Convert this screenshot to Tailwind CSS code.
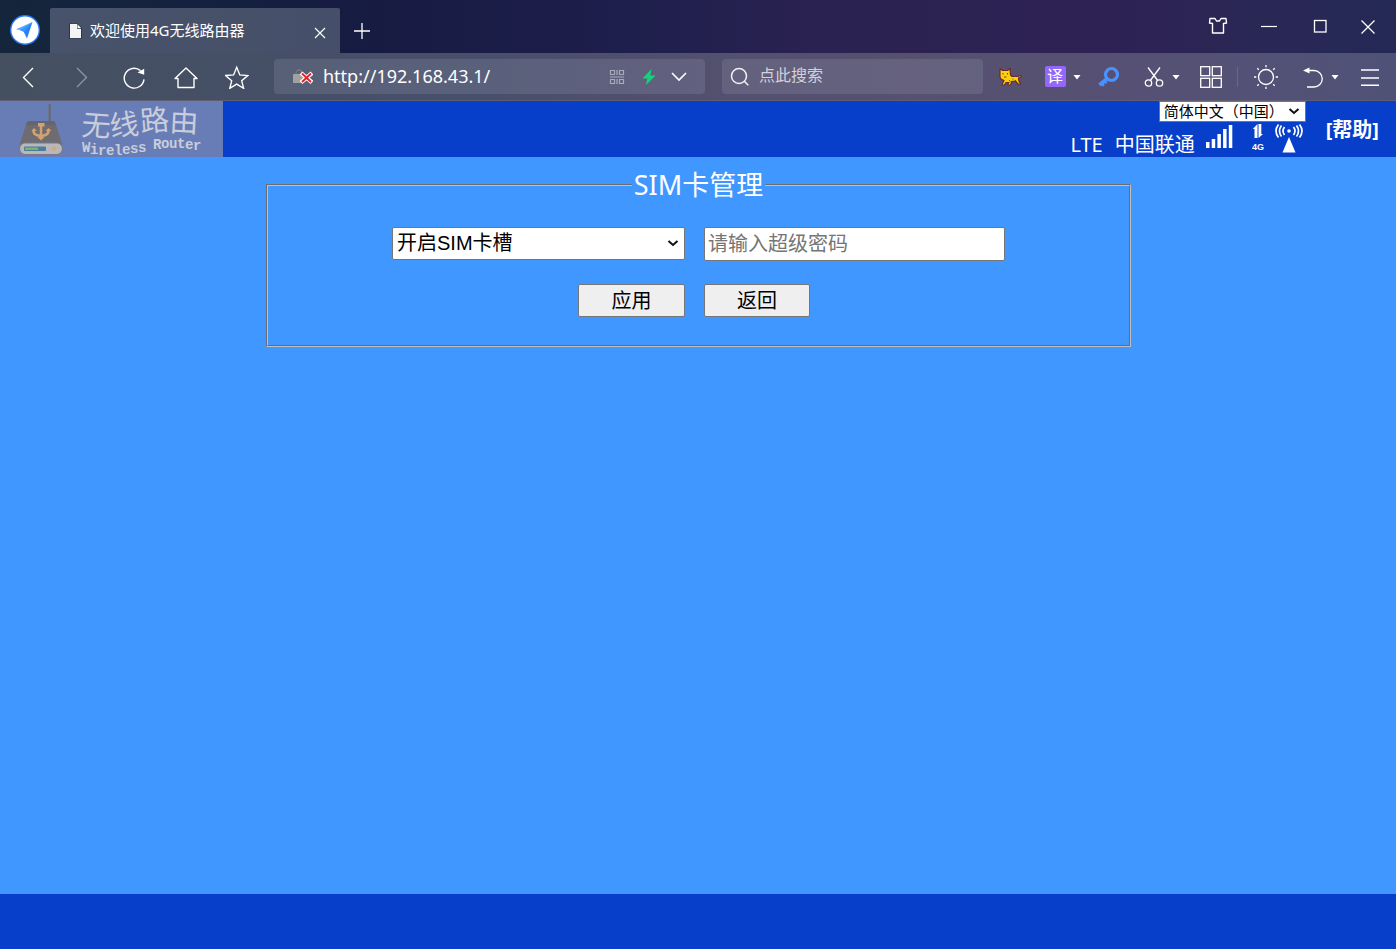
<!DOCTYPE html>
<html lang="zh-CN">
<head>
<meta charset="utf-8">
<title>欢迎使用4G无线路由器</title>
<script src="https://cdn.jsdelivr.net/npm/@tailwindcss/browser@4"></script>
</head>
<body class="flex min-h-screen flex-col bg-[#4097ff] font-['Noto_Sans','Noto_Sans_CJK_SC',sans-serif] text-white">

<!-- Title bar -->
<div class="flex h-[53px] items-stretch bg-[linear-gradient(90deg,#14263b_0%,#14213f_14%,#171b42_27%,#1e1f4c_45%,#2a2251_58%,#2e2254_80%,#2a2755_90%,#242955_100%)]">
  <div class="flex w-[50px] items-center justify-center pt-1.5">
    <svg class="size-[30px]" viewBox="0 0 30 30"><circle cx="15" cy="15" r="14.3" fill="#fff" stroke="#2878f0" stroke-width="1.4"/><path d="M22.500 7 6 14.300l7.200 1.500z" fill="#58a6ff"/><path d="M22.500 7 13.200 15.800 17 23.500z" fill="#2480f5"/><path d="M22.500 7 10 15.200l4.200 1.800z" fill="#3a92fb"/></svg>
  </div>
  <div class="mt-2 flex w-[290px] items-center rounded-t-xs bg-[linear-gradient(90deg,#47536a,#464f69)] pl-[19px] pr-3">
    <svg class="h-4 w-[13px]" viewBox="0 0 13 16"><path d="M0 .5h8.500L13 5v10.500H0z" fill="#2c3445"/><path d="M1 1h7v4.800h4V15H1z" fill="#f4f4f4"/><path d="M8.500 1.200 12 5H8.500z" fill="#fff"/></svg>
    <span class="ml-2 flex-1 pb-0.5 text-[15px] leading-5">欢迎使用4G无线路由器</span>
    <button aria-label="关闭标签页" class="flex size-4 items-center justify-center pt-1"><svg class="size-4" viewBox="0 0 16 16" fill="none" stroke="#fff" stroke-width="1.200"><path d="m3 3 10 10M13 3 3 13"/></svg></button>
  </div>
  <button aria-label="新建标签页" class="flex w-11 items-center justify-center pt-2"><svg class="size-[18px]" viewBox="0 0 18 18" stroke="#fff" stroke-width="1.300"><path d="M9 1v16M1 9h16"/></svg></button>
  <div class="flex-1"></div>
  <div class="flex items-center pr-[5px]">
    <button aria-label="皮肤" class="flex w-[51px] justify-center pb-0.5"><svg class="size-5" viewBox="0 0 20 20" fill="none" stroke="#fff" stroke-width="1.400" stroke-linejoin="round"><path d="M7 2.500H2L1.500 7 4.500 7.500v9.500h11V7.500l3-.500L18 2.500h-5L11.500 5h-3z"/></svg></button>
    <button aria-label="最小化" class="flex w-[51px] justify-center pb-0.5"><svg class="size-4" viewBox="0 0 16 16" stroke="#fff" stroke-width="1.200"><path d="M0 8.500h16"/></svg></button>
    <button aria-label="最大化" class="flex w-[51px] justify-center pb-0.5"><svg class="size-4" viewBox="0 0 16 16" fill="none" stroke="#fff" stroke-width="1.300"><rect x="2.500" y="2.500" width="11.500" height="11.500"/></svg></button>
    <button aria-label="关闭" class="flex w-[46px] justify-center"><svg class="size-4" viewBox="0 0 16 16" stroke="#fff" stroke-width="1.300"><path d="m1.500 1.500 13 13M14.500 1.500l-13 13"/></svg></button>
  </div>
</div>

<!-- Toolbar -->
<div class="flex h-12 items-center border-b border-[#605c74] bg-[linear-gradient(90deg,#445060_0%,#454f65_15%,#484f6b_34%,#54506f_52%,#57506f_65%,#555175_85%,#4f5277_100%)]">
  <button aria-label="后退" class="flex w-14 justify-center"><svg class="size-6" viewBox="0 0 24 24" fill="none" stroke="#fff" stroke-width="1.400"><path d="M17 3 7.500 12.500 17 22"/></svg></button>
  <button aria-label="前进" class="flex w-[52px] justify-center"><svg class="size-6" viewBox="0 0 24 24" fill="none" stroke="#8d94a3" stroke-width="1.400"><path d="M7 3l9.500 9.500L7 22"/></svg></button>
  <button aria-label="刷新" class="flex w-[52px] justify-center"><svg class="size-6" viewBox="0 0 24 24" fill="none" stroke="#fff" stroke-width="1.400"><path d="M18.600 5.700A9.900 9.900 0 1 0 22 14.300"/><path d="m15.500 7.500 6.700-3.800v6z" fill="#fff" stroke="none"/></svg></button>
  <button aria-label="主页" class="flex w-[52px] justify-center"><svg class="size-6" viewBox="0 0 24 24" fill="none" stroke="#fff" stroke-width="1.400" stroke-linejoin="round"><path d="M4 13.500H1L12 3 23 13.500h-3v9H4z"/></svg></button>
  <button aria-label="收藏" class="flex w-[50px] justify-center"><svg class="size-6" viewBox="0 0 24 24" fill="none" stroke="#fff" stroke-width="1.400"><path d="m11.700 2.300 3.100 7.600 8 .6-6.100 5.300 1.900 7.500-6.900-4.200-6.900 4.200 1.900-7.500-6.100-5.300 8-.6z"/></svg></button>

  <div class="ml-3 flex h-[35px] min-w-0 flex-1 items-center rounded bg-[#a0a5c0]/20 pl-[19px] pr-[17px]">
    <svg class="h-4 w-5 shrink-0" viewBox="0 0 20 16"><path d="M3 6V4a3 3 0 0 1 6 0v2" fill="none" stroke="#77787f" stroke-width="1.300"/><path d="M0 5h11v9H0z" fill="#a3a19f"/><path d="m8 4 11 9.500M19 4 8 13.500" stroke="#fff" stroke-width="4.200"/><path d="m9 4.500 9 8.500M18 4.500l-9 8.500" stroke="#e01f26" stroke-width="1.800"/></svg>
    <input type="text" aria-label="地址" value="http://192.168.43.1/" class="ml-2.5 min-w-0 flex-1 bg-transparent text-[18px] text-white outline-none">
    <button aria-label="二维码"><svg class="size-4" viewBox="0 0 16 16" fill="none" stroke="#aaa9ba" stroke-width="1.200"><path d="M1.500 1.500h4v4h-4zM10.500 1.500h4v4h-4zM1.500 10.500h4v4h-4zM10.500 10.500h4v4h-4zM8 1v5M8 10v5M1 8h14"/></svg></button>
    <button aria-label="极速模式" class="ml-4"><svg class="size-4" viewBox="0 0 16 16"><path d="M10.500 0 1.500 9.500h4.800L5 16l9.500-9.500H9.300z" fill="#14d37b"/></svg></button>
    <button aria-label="展开地址栏" class="ml-[13px]"><svg class="h-4 w-[18px]" viewBox="0 0 18 16" fill="none" stroke="#fff" stroke-width="1.600"><path d="m2 4 7 7 7-7"/></svg></button>
  </div>

  <div class="ml-[17px] flex h-[35px] w-[261px] items-center rounded bg-[#a0a5c0]/20 pl-2 pr-2">
    <svg class="size-5 shrink-0" viewBox="0 0 20 20" fill="none" stroke="#f1f0f4" stroke-width="1.500"><circle cx="9" cy="9" r="7.500"/><path d="m14.300 14.300 4 4"/></svg>
    <input type="text" aria-label="搜索" placeholder="点此搜索" class="ml-[9px] min-w-0 flex-1 bg-transparent pb-1 text-[16px] text-white outline-none placeholder:text-[#d3d1da]">
  </div>

  <button aria-label="猎豹" class="flex w-[54px] justify-center"><svg class="h-5 w-6" viewBox="0 0 24 20"><path d="m2 1.500 2.500 2h5l2.500-2 .500 6.500 1.500 1.500h6l2-1H23v1.500l-2.500 1 .5 3.500 1.500 1.500v1h-2.500l-2.500-3-4.500.5.500 1.500-1.500 2h-2V17l1-1.500H8L6.500 18h-2v-1.500l1.500-3L3 12 2 10z" fill="#f8d010" stroke="#6b2a2c" stroke-width="1.200" stroke-linejoin="round"/><path d="M4.500 6h1v1.500h-1zM9 6h1v1.500H9zM6 9.500h2.500v1H6zM14.500 11.500h1v1h-1zM17 13h1v1h-1zM11 13h1v1h-1z" fill="#8b3d1b"/></svg></button>
  <button aria-label="翻译" class="flex w-9 justify-center"><span class="flex size-[21px] items-center justify-center rounded-xs bg-[#9467fb] pb-0.5 text-[16px] leading-5">译</span></button>
  <button aria-label="翻译选项" class="flex w-2"><svg class="h-2 w-2" viewBox="0 0 8 8"><path d="M.5 2h7L4 6.500z" fill="#fff"/></svg></button>
  <button aria-label="密码" class="flex w-14 justify-center"><svg class="size-[22px]" viewBox="0 0 22 22" fill="none" stroke="#4992ff"><circle cx="13.500" cy="8.500" r="6" stroke-width="3.200"/><path d="m9.500 12.500-8 6.500" stroke-width="3.800"/><path d="m3.500 17 2.500 3M6.500 15l2 2.500" stroke-width="2"/></svg></button>
  <button aria-label="截图" class="flex w-[34px] justify-center"><svg class="size-5" viewBox="0 0 20 20" fill="none" stroke="#fff" stroke-width="1.300"><circle cx="4.500" cy="16" r="3.200"/><circle cx="15.500" cy="16" r="3.200"/><path d="M4 .5 13.700 13.500M16 .5 6.300 13.500"/></svg></button>
  <button aria-label="截图选项" class="flex w-2.5 justify-center"><svg class="h-2 w-2" viewBox="0 0 8 8"><path d="M.5 2h7L4 6.500z" fill="#fff"/></svg></button>
  <button aria-label="应用中心" class="ml-1 flex w-[52px] justify-center"><svg class="size-[22px]" viewBox="0 0 22 22" fill="none" stroke="#fff" stroke-width="1.300"><rect x=".7" y=".7" width="9" height="9"/><rect x="12.300" y=".7" width="9" height="9"/><rect x=".7" y="12.300" width="9" height="9"/><rect x="12.300" y="12.300" width="9" height="9"/></svg></button>
  <span class="h-5 w-px bg-[#6a6885]"></span>
  <button aria-label="夜间模式" class="flex w-14 justify-center"><svg class="size-6" viewBox="0 0 24 24" fill="none" stroke="#fff" stroke-width="1.300"><circle cx="12" cy="12" r="7.500"/><path d="M12 0v2.300M12 21.700V24M0 12h2.300M21.700 12H24M3.300 3.300l1.500 1.500M19.200 19.200l1.500 1.500M3.300 20.700l1.500-1.500M19.200 4.800l1.500-1.500"/></svg></button>
  <button aria-label="恢复" class="flex w-9 justify-center pl-0.5"><svg class="h-[22px] w-5" viewBox="0 0 20 22" fill="none" stroke="#fff" stroke-width="1.300"><path d="M4 4.500h7a8.200 8.200 0 0 1 0 16.500H4"/><path d="m0 4.500 6.500-3v6z" fill="#fff" stroke="none"/></svg></button>
  <button aria-label="恢复选项" class="flex w-2.5 justify-center"><svg class="h-2 w-2" viewBox="0 0 8 8"><path d="M.5 2h7L4 6.500z" fill="#fff"/></svg></button>
  <button aria-label="菜单" class="flex w-14 justify-center pl-1"><svg class="size-[18px]" viewBox="0 0 18 18" stroke="#fff" stroke-width="1.400"><path d="M0 2h18M0 10h18M0 17.300h18"/></svg></button>
</div>

<!-- Router page header -->
<header class="flex h-14 items-start justify-between bg-[#073fcb]">
  <svg class="h-14 w-[223px]" viewBox="0 0 223 56" role="img" aria-label="无线路由 Wireless Router">
    <rect width="223" height="56" fill="#687db5"/>
    <path d="M48.500 3h2.500v20h-2.500z" fill="#676c7b"/>
    <path d="M27 21q1-1 3-1h22q2 0 3 1l7.500 23H19.500z" fill="#6e6c71"/><path d="M26 24q1-4 4-4h22q3 0 4 4z" fill="#64656f"/>
    <path d="M41 23v14M34 29q-2 5 7 6 9-1 7-6" stroke="#d2a273" stroke-width="2.500" fill="none"/>
    <path d="M38 22h6.500v3.500H38zM31.500 30l2.500-3 3 3zM45.500 30l3-3 3 3zM37.500 36h7l-3.500 3.500z" fill="#d2a273"/>
    <rect x="19.500" y="42" width="43" height="11.500" rx="5.500" fill="#b7b8bd" stroke="#77798a" stroke-width="1.200"/>
    <rect x="24" y="45.500" width="22" height="4.500" rx="1" fill="#4d7c9b"/><path d="M25 46.500h13v2.500H25z" fill="#79b569"/><circle cx="54" cy="47.500" r="2.300" fill="#dda771"/>
    <text x="81 111 141 169" y="34 36 31 30" rotate="4 -7 -5 3" font-family="'Noto Sans CJK SC',sans-serif" font-weight="400" font-size="29" fill="#c9cddb">无线路由</text>
    <text x="82 90 98 106 114 122 130 138 153 161 169 177 185 193" y="51 53 54 54 54 53 52 51 48 47 47 47 48 49" font-family="'Liberation Mono',monospace" font-weight="700" font-size="14" fill="#c9cddb">WirelessRouter</text>
  </svg>

  <div class="flex pr-[17px]">
    <div class="flex flex-col items-end">
      <div class="relative">
        <select aria-label="语言" class="block h-[21px] w-[147px] appearance-none border border-[#767676] bg-white pl-1 text-[15px] leading-[19px] text-black"><option>简体中文（中国）</option></select>
        <svg class="pointer-events-none absolute right-[6px] top-[6px] h-2 w-3" viewBox="0 0 12 8" fill="none" stroke="#111" stroke-width="2"><path d="m1.500 2 4.500 4 4.500-4"/></svg>
      </div>
      <div class="flex items-start pr-[3px]">
        <span class="mt-[9px] text-[20px] leading-7">LTE</span>
        <span class="ml-3 mt-[9px] text-[20px] leading-7">中国联通</span>
        <svg class="ml-[11px] mt-[3px] h-6 w-[27px]" viewBox="0 0 27 24" fill="#fff"><path d="M0 17h3.500v6H0zM5.700 14h3.500v9H5.700zM11.400 9h3.500v14h-3.500zM17.100 4h3.500v19h-3.500zM22.800 0h3.500v23h-3.500z"/></svg>
        <svg class="ml-[19px] mt-0.5 h-7 w-3" viewBox="0 0 12 28" fill="#fff"><path d="M5.500 0v14H2.500V5H.8zM6.500 14V0h2.800v10H11z"/><text x="0" y="26" font-family="'Liberation Sans',sans-serif" font-weight="700" font-size="9">4G</text></svg>
        <svg class="ml-[11px] mt-px h-[30px] w-7" viewBox="0 0 28 30" fill="none" stroke="#fff" stroke-width="1.700"><circle cx="14" cy="8" r="1.800" fill="#fff" stroke="none"/><path d="M14 14l6.500 15.500h-13z" fill="#fff" stroke="none"/><path d="M9.500 4q-3 4 0 8M18.500 4q3 4 0 8M6.500 2.500q-4 5.500 0 11M21.500 2.500q4 5.500 0 11M3.500 1.500q-5 6.500 0 13M24.500 1.500q5 6.500 0 13"/></svg>
      </div>
    </div>
    <a href="#help" class="ml-5 mt-[15px] text-[20px] font-bold leading-7">[帮助]</a>
  </div>
</header>

<!-- SIM card form -->
<main class="flex-1 pl-px pt-2.5">
  <form>
    <fieldset class="mx-auto w-[62%] border-2 border-[#c0c0c0] [border-style:groove] pb-7">
      <legend class="mx-auto px-0.5 text-[27px] leading-9">SIM卡管理</legend>
      <div class="mt-6 grid grid-cols-[293px_301px] items-start justify-center gap-x-[19px] gap-y-[23px] font-['Liberation_Sans','Noto_Sans_CJK_SC',sans-serif] text-[20px] text-black">
        <div class="relative">
          <select aria-label="SIM卡槽" class="block h-[33px] w-full appearance-none rounded-xs border border-[#767676] bg-white pl-1 leading-[31px]"><option>开启SIM卡槽</option></select>
          <svg class="pointer-events-none absolute right-[6px] top-3 h-2 w-3" viewBox="0 0 12 8" fill="none" stroke="#111" stroke-width="2"><path d="m1.500 2 4.500 4 4.500-4"/></svg>
        </div>
        <input type="password" aria-label="超级密码" placeholder="请输入超级密码" class="h-[34px] rounded-xs border border-[#767676] bg-white px-[3px] placeholder:text-[#757575]">
        <button type="button" class="h-[33px] w-[107px] justify-self-end rounded-xs border border-[#767676] bg-[#efefef] leading-7">应用</button>
        <button type="button" class="h-[33px] w-[106px] rounded-xs border border-[#767676] bg-[#efefef] leading-7">返回</button>
      </div>
    </fieldset>
  </form>
</main>

<footer class="h-[55px] bg-[#073fcb]"></footer>
</body>
</html>
